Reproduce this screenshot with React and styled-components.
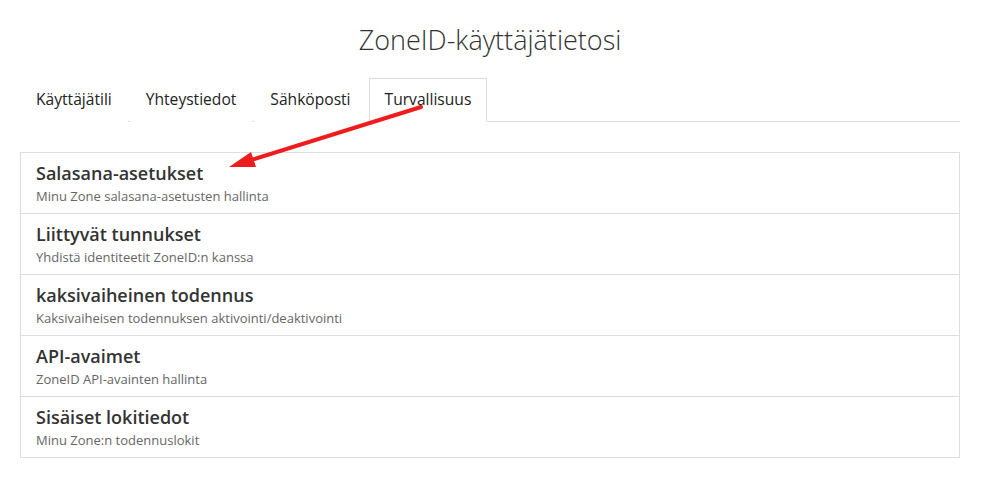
import React from 'react';
import styled, { createGlobalStyle } from 'styled-components';

const GlobalStyle = createGlobalStyle`
  html, body { margin: 0; padding: 0; background: #fff; }
  body { font-family: "Open Sans", "Liberation Sans", sans-serif; color: #333; }
  * { box-sizing: border-box; }
`;

const Page = styled.div`
  position: relative;
  width: 990px;
  height: 486px;
  padding: 0 30px 0 20px;
`;

const Title = styled.h1`
  margin: 0;
  padding-top: 22px;
  height: 78px;
  text-align: center;
  font-size: 27px;
  font-weight: 300;
  line-height: 36px;
  color: #333;
`;

const Tabs = styled.ul`
  display: flex;
  margin: 0;
  padding: 0;
  list-style: none;
  border-bottom: 1px solid #ddd;
`;

const Tab = styled.li`
  margin-right: 2px;
  margin-bottom: -1px;
  padding: 10px 15px 11px;
  font-size: 15.6px;
  line-height: 21px;
  color: #222;
  border: 1px solid ${p => (p.$active ? '#ddd' : 'transparent')};
  border-bottom-color: ${p => (p.$active ? '#fff' : 'transparent')};
  background: #fff;
`;

const List = styled.div`
  margin-top: 30px;
  border: 1px solid #ddd;
`;

const Item = styled.div`
  padding: 8px 15px 0;
  height: ${p => (p.$first ? '60px' : '61px')};
  border-top: ${p => (p.$first ? 'none' : '1px solid #ddd')};
`;

const ItemTitle = styled.h4`
  margin: 0;
  font-size: 18px;
  font-weight: 600;
  line-height: 24px;
  color: #333;
`;

const ItemText = styled.p`
  margin: 2px 0 0;
  font-size: 13px;
  line-height: 19px;
  color: #666;
`;

const Arrow = styled.svg`
  position: absolute;
  left: 0;
  top: 0;
  pointer-events: none;
`;

const tabs = ['Käyttäjätili', 'Yhteystiedot', 'Sähköposti', 'Turvallisuus'];

const items = [
  ['Salasana-asetukset', 'Minu Zone salasana-asetusten hallinta'],
  ['Liittyvät tunnukset', 'Yhdistä identiteetit ZoneID:n kanssa'],
  ['kaksivaiheinen todennus', 'Kaksivaiheisen todennuksen aktivointi/deaktivointi'],
  ['API-avaimet', 'ZoneID API-avainten hallinta'],
  ['Sisäiset lokitiedot', 'Minu Zone:n todennuslokit'],
];

export default function App() {
  return (
    <Page>
      <GlobalStyle />
      <Title>ZoneID-käyttäjätietosi</Title>
      <Tabs>
        {tabs.map((t, i) => (
          <Tab key={t} $active={i === 3}>{t}</Tab>
        ))}
      </Tabs>
      <List>
        {items.map(([title, text], i) => (
          <Item key={title} $first={i === 0}>
            <ItemTitle>{title}</ItemTitle>
            <ItemText>{text}</ItemText>
          </Item>
        ))}
      </List>
      <Arrow width="990" height="486" viewBox="0 0 990 486">
        <line x1="421" y1="107" x2="248" y2="161" stroke="#ee1c1c" strokeWidth="4" strokeLinecap="round" />
        <polygon points="229,167 251,152 256,167" fill="#ee1c1c" />
      </Arrow>
    </Page>
  );
}
